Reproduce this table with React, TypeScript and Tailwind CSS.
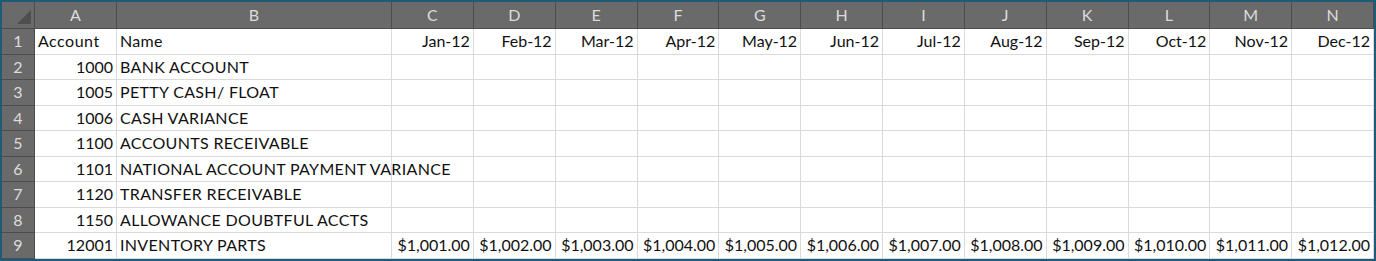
import React from "react";

const months = [
  "Jan-12",
  "Feb-12",
  "Mar-12",
  "Apr-12",
  "May-12",
  "Jun-12",
  "Jul-12",
  "Aug-12",
  "Sep-12",
  "Oct-12",
  "Nov-12",
  "Dec-12",
];

const cols = ["A", "B", "C", "D", "E", "F", "G", "H", "I", "J", "K", "L", "M", "N"];

const accounts = [
  { id: "1000", name: "BANK ACCOUNT" },
  { id: "1005", name: "PETTY CASH/ FLOAT" },
  { id: "1006", name: "CASH VARIANCE" },
  { id: "1100", name: "ACCOUNTS RECEIVABLE" },
  { id: "1101", name: "NATIONAL ACCOUNT PAYMENT VARIANCE" },
  { id: "1120", name: "TRANSFER RECEIVABLE" },
  { id: "1150", name: "ALLOWANCE DOUBTFUL ACCTS" },
  { id: "12001", name: "INVENTORY PARTS", values: true },
];

const head =
  "bg-[#6a6a6a] border-r border-b border-[#4c4c4c] text-[#dcdcdc] flex items-center justify-center";
const cell =
  "border-r border-b border-[#dadada] bg-white flex items-center px-[3px] whitespace-nowrap overflow-visible";

export default function App() {
  return (
    <div
      className="w-[1376px] h-[261px] border-2 border-[#1f5b79] bg-white overflow-hidden"
      style={{ fontFamily: "Lato, 'Liberation Sans', sans-serif" }}
    >
      <div className="grid grid-cols-[33px_82px_275px_repeat(12,1fr)] grid-rows-[27px_repeat(9,25.5px)] text-[16px] text-[#111]">
        {/* corner */}
        <div className={head + " relative"}>
          <svg className="absolute left-[14px] top-[8px]" width="16" height="15" viewBox="0 0 16 15">
            <polygon points="15,0 15,14 1,14" fill="#4e4e4e" />
          </svg>
        </div>
        {cols.map((c) => (
          <div key={c} className={head}>
            {c}
          </div>
        ))}

        {/* row 1 */}
        <div className={head}>1</div>
        <div className={cell + " tracking-[0.5px]"}>Account</div>
        <div className={cell + " tracking-[0.3px]"}>Name</div>
        {months.map((m) => (
          <div key={m} className={cell + " justify-end"}>
            {m}
          </div>
        ))}

        {accounts.map((a, i) => (
          <React.Fragment key={a.id}>
            <div className={head}>{i + 2}</div>
            <div className={cell + " justify-end"}>{a.id}</div>
            <div className={cell + " relative z-10 tracking-[0.33px]"}>{a.name}</div>
            {months.map((m, j) => (
              <div key={m} className={cell + " justify-end"}>
                {a.values ? `$1,0${String(j + 1).padStart(2, "0")}.00` : ""}
              </div>
            ))}
          </React.Fragment>
        ))}
      </div>
    </div>
  );
}
